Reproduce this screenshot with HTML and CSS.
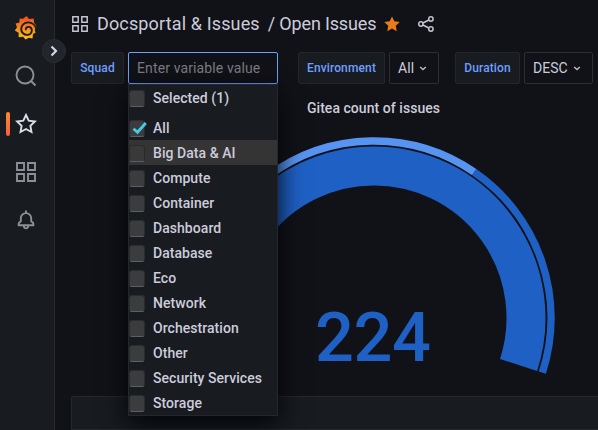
FILE: index.html
```html
<!DOCTYPE html>
<html lang="en">
<head>
<meta charset="utf-8">
<title>Open Issues</title>
<link rel="stylesheet" href="styles.css">
</head>
<body>
<nav class="sidebar">
  <svg class="logo" width="24" height="26" viewBox="0 0 24 26">
    <defs><linearGradient id="flame" x1="0" y1="1" x2="0" y2="0"><stop offset="0" stop-color="#fcc90c"/><stop offset=".35" stop-color="#f99a1c"/><stop offset="1" stop-color="#ee4a28"/></linearGradient></defs>
    <path fill="url(#flame)" d="M9 3.800 12.500 1l2.600 3 4.500-.4.500 4.300c1.600 1.300 2.400 3.200 2.300 5.400l-1.700 1.200.8 3.200-2.500 1.400-.5 4.500-3.700-.9-3.200 1.900-2.500-2.800-4.400.5-.1-4.500L.8 15.500 3 12.200 1.600 8.400 5.400 7.500 5.700 3.400z"/>
    <path fill="none" stroke="#181b1f" stroke-width="1.900" stroke-linecap="round" d="M22.500 14.500C21.300 10 17.800 7.400 14.300 7.400c-4.200 0-7.100 3-7.100 6.500s2.700 6 5.900 6c2.800 0 4.700-2 4.700-4.300 0-2.300-1.500-3.700-3.400-3.700-1.700 0-2.700 1.200-2.600 2.500"/>
  </svg>
  <svg class="nav-icon search" width="22" height="22" viewBox="0 0 22 22"><circle cx="10" cy="10" r="8.500"/><path d="m16 16 4.500 4.500"/></svg>
  <div class="nav-active"><svg class="nav-icon" width="22" height="22" viewBox="0 0 22 22"><path d="m11 2 2.700 5.700 6.200.8-4.500 4.300 1.100 6.200-5.500-3-5.500 3 1.100-6.200-4.500-4.300 6.200-.8z"/></svg></div>
  <svg class="nav-icon boards" width="20" height="20" viewBox="0 0 20 20"><path d="M1 1h7v7H1zM12 1h7v7h-7zM1 12h7v7H1zM12 12h7v7h-7z"/></svg>
  <svg class="nav-icon bell" width="18" height="20" viewBox="0 0 18 20"><path d="M9 .5V3M3.800 12V8.300a5.200 5.200 0 0 1 10.400 0V12M3.800 12c-1.300 0-2.100.7-2.100 1.900v1.300h14.600v-1.300c0-1.200-.8-1.900-2.100-1.900M6.700 15.500c.3 3.800 4.300 3.800 4.600 0"/></svg>
  <button class="expand" aria-label="Expand"><svg width="8" height="12" viewBox="0 0 8 12"><path d="m1.500 1.500 4.500 4.500-4.500 4.500"/></svg></button>
</nav>
<main class="page">
  <header class="titlebar">
    <svg class="grid-icon" width="16" height="16" viewBox="0 0 16 16"><path d="M.8.8h5.400v5.400H.8zM9.800.8h5.400v5.400H9.800zM.8 9.800h5.400v5.400H.8zM9.800 9.800h5.400v5.400H9.800z"/></svg>
    <h1><span class="folder">Docsportal &amp; Issues</span><span class="dashboard">/ Open Issues</span></h1>
    <svg class="favorite" width="16" height="16" viewBox="0 0 16 16"><path d="m8 .4 2.300 4.900 5.400.7-3.900 3.700.9 5.500L8 12.600l-4.700 2.600.9-5.500L.3 6l5.400-.7z"/></svg>
    <svg class="share" width="16" height="16" viewBox="0 0 16 16"><circle cx="2.900" cy="8" r="2.200"/><circle cx="12.900" cy="3" r="2.200"/><circle cx="12.900" cy="13" r="2.200"/><path d="m5 7 5.800-3M5 9l5.800 3"/></svg>
  </header>
  <div class="variables">
    <div class="variable squad">
      <label class="name">Squad</label>
      <div class="picker">
        <input type="text" placeholder="Enter variable value">
        <ul class="options">
          <li class="selected"><i></i>Selected (1)</li>
          <li><i><svg width="16" height="14" viewBox="0 0 16 14"><path d="m1.500 7.800 4 3.500 8.300-9.300"/></svg></i>All</li>
          <li class="hover"><i></i>Big Data &amp; AI</li>
          <li><i></i>Compute</li>
          <li><i></i>Container</li>
          <li><i></i>Dashboard</li>
          <li><i></i>Database</li>
          <li><i></i>Eco</li>
          <li><i></i>Network</li>
          <li><i></i>Orchestration</li>
          <li><i></i>Other</li>
          <li><i></i>Security Services</li>
          <li><i></i>Storage</li>
        </ul>
      </div>
    </div>
    <div class="variable environment">
      <label class="name">Environment</label>
      <div class="value">All<svg width="8" height="5" viewBox="0 0 8 5"><path d="m1.200 1 2.800 2.600L6.800 1"/></svg></div>
    </div>
    <div class="variable duration">
      <label class="name">Duration</label>
      <div class="value">DESC<svg width="8" height="5" viewBox="0 0 8 5"><path d="m1.200 1 2.800 2.600L6.800 1"/></svg></div>
    </div>
  </div>
  <section class="panel">
    <h2>Gitea count of issues</h2>
    <svg class="gauge" width="370" height="245" viewBox="-185 -185 370 245">
      <path class="low" d="M-168.330 54.690A177 177 0 0 1 100.250 -145.870"/>
      <path class="high" d="M100.250 -145.870A177 177 0 0 1 168.330 54.690"/>
      <path class="band" d="M-144.560 46.970A152 152 0 1 1 144.560 46.970"/>
      <text x="-1.300" y="43" text-anchor="middle">224</text>
    </svg>
  </section>
  <section class="next-panel"></section>
</main>
</body>
</html>
```
FILE: styles.css
```css
* { box-sizing: border-box; }
body {
  margin: 0;
  width: 598px;
  height: 430px;
  overflow: hidden;
  display: flex;
  background: #111217;
  color: #ccccdc;
  font: 14px/22px Roboto, sans-serif;
  letter-spacing: .05px;
}
svg { display: block; flex: none; }
.sidebar {
  position: relative;
  width: 55px;
  flex: none;
  background: #181b1f;
  border-right: 1px solid #27292e;
  display: flex;
  flex-direction: column;
  align-items: center;
  padding-top: 15px;
}
.nav-icon { fill: none; stroke: #8e8e99; stroke-width: 1.900; }
.search { margin-top: 24px; }
.nav-active {
  width: 100%;
  height: 24px;
  margin-top: 25px;
  display: flex;
  align-items: center;
  padding-left: 6px;
}
.nav-active::before {
  content: "";
  width: 4px;
  height: 24px;
  margin-right: 5px;
  border-radius: 2px;
  background: linear-gradient(#ff8833, #f55f3e);
}
.nav-active .nav-icon { stroke: #dcdce8; }
.boards { margin-top: 26px; }
.bell { margin-top: 28px; }
.logo, .search, .boards, .bell { margin-left: -2px; }
.expand {
  position: absolute;
  left: 42px;
  top: 39px;
  width: 24px;
  height: 24px;
  padding: 0;
  border: 1px solid #2b2d33;
  border-radius: 50%;
  background: #22252b;
  display: flex;
  align-items: center;
  justify-content: center;
}
.expand path { fill: none; stroke: #d5d5e3; stroke-width: 2.200; }
.page { flex: 1; min-width: 0; display: flex; flex-direction: column; padding-left: 16px; }
.titlebar { height: 52px; display: flex; align-items: center; padding: 0 0 4px 1px; }
.grid-icon, .share { fill: none; stroke: #c3c3d2; stroke-width: 1.500; }
h1 { width: 279px; margin: 0 0 0 9px; font-size: 18px; font-weight: 400; letter-spacing: 0; white-space: nowrap; }
.folder { margin-right: 8px; letter-spacing: .14px; }
.dashboard { letter-spacing: -.16px; }
.favorite { fill: #eb7b18; margin-left: 8px; }
.share { margin-left: 18px; }
.variables { display: flex; height: 32px; }
.variable { display: flex; gap: 4px; margin-right: 16px; }
.squad { margin-right: 20px; }
.name, .value {
  height: 32px;
  border: 1px solid #24262c;
  border-radius: 2px;
  display: flex;
  align-items: center;
  padding: 0 8px;
}
.name { background: #181b1f; color: #6e9fff; font-size: 12px; font-weight: 500; letter-spacing: .13px; justify-content: center; padding: 0; }
.squad .name { width: 53px; }
.environment .name { width: 87px; }
.duration .name { width: 65px; }
.value { border-color: #2d2e34; justify-content: space-between; padding-bottom: 1px; }
.environment .value { width: 50px; padding-right: 11px; }
.duration .value { width: 69px; padding-right: 11px; }
.value path { fill: none; stroke: #b8b8c6; stroke-width: 1.500; }
.value svg { margin-top: 1px; }
.picker { position: relative; width: 150px; }
input {
  display: block;
  width: 150px;
  height: 32px;
  padding: 0 8px;
  border: 1px solid #6e9fff;
  border-radius: 2px;
  background: #111217;
  font: inherit;
  letter-spacing: 0;
}
input::placeholder { color: #7b7c85; opacity: 1; }
.options {
  position: absolute;
  z-index: 2;
  top: 32px;
  left: 0;
  width: 150px;
  margin: 0;
  padding: 0;
  list-style: none;
  background: #181b1f;
  border: 1px solid #25272d;
  box-shadow: 0 8px 24px #010409;
}
.options li { height: 25px; display: flex; align-items: center; gap: 8px; white-space: nowrap; font-weight: 500; }
.options .selected { height: 30px; padding-bottom: 5px; }
.options .hover { background: #343434; }
.options i {
  width: 16px;
  height: 17px;
  flex: none;
  margin-top: 1px;
  border-radius: 3px;
  background: #3b3c3d;
  border: 1px solid #2a2c2f;
  border-bottom-color: #5a6066;
}
.options .hover i { background: #393939; border-color: #2a2a2b; border-bottom-color: #5a6066; }
.options i svg { margin: 0 0 0 2px; }
.options i path { fill: none; stroke: #48cbe4; stroke-width: 2.800; }
.panel { height: 312px; }
h2 { margin: 13px 0 0; padding-left: 76px; width: 529px; text-align: center; font-size: 14px; font-weight: 500; line-height: 22px; }
input { letter-spacing: .12px; }
.gauge { margin: 14px 0 0 117.500px; overflow: visible; }
.gauge path { fill: none; }
.gauge .low { stroke: #5794f2; stroke-width: 7.500; }
.gauge .high { stroke: #1f60c4; stroke-width: 7.500; }
.gauge .band { stroke: #1f60c4; stroke-width: 39; }
.gauge text { fill: #1f60c4; font-size: 68.500px; font-weight: 500; letter-spacing: -.5px; }
.next-panel { height: 34px; background: #181b1f; border: 1px solid #25272c; border-right: 0; border-radius: 2px 0 0 0; }
```
